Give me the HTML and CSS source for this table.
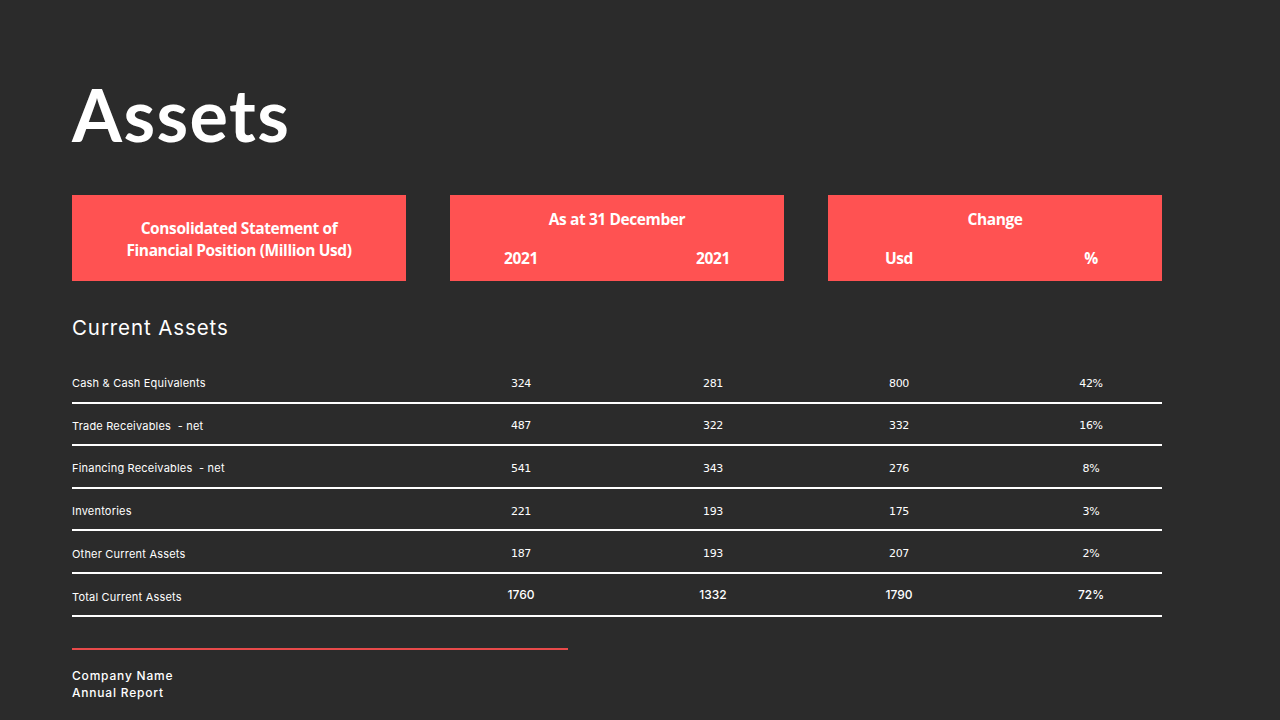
FILE: index.html
```html
<!DOCTYPE html>
<html>
<head>
<meta charset="utf-8">
<link rel="stylesheet" href="styles.css">
</head>
<body>
<main class="page">
  <h1 class="title">Assets</h1>

  <section class="head-grid">
    <div class="head-box head-single">
      <span>Consolidated Statement of</span>
      <span>Financial Position (Million Usd)</span>
    </div>
    <div class="head-box">
      <div class="head-top">As at 31 December</div>
      <div class="pair"><span class="cell">2021</span><span class="cell">2021</span></div>
    </div>
    <div class="head-box">
      <div class="head-top">Change</div>
      <div class="pair"><span class="cell">Usd</span><span class="cell">%</span></div>
    </div>
  </section>

  <h2 class="section-title">Current Assets</h2>

  <section class="table">
    <div class="row">
      <div class="label">Cash &amp; Cash Equivalents</div>
      <div class="pair"><span class="cell">324</span><span class="cell">281</span></div>
      <div class="pair"><span class="cell">800</span><span class="cell">42%</span></div>
    </div>
    <div class="row">
      <div class="label">Trade Receivables &nbsp;- net</div>
      <div class="pair"><span class="cell">487</span><span class="cell">322</span></div>
      <div class="pair"><span class="cell">332</span><span class="cell">16%</span></div>
    </div>
    <div class="row">
      <div class="label">Financing Receivables &nbsp;- net</div>
      <div class="pair"><span class="cell">541</span><span class="cell">343</span></div>
      <div class="pair"><span class="cell">276</span><span class="cell">8%</span></div>
    </div>
    <div class="row">
      <div class="label">Inventories</div>
      <div class="pair"><span class="cell">221</span><span class="cell">193</span></div>
      <div class="pair"><span class="cell">175</span><span class="cell">3%</span></div>
    </div>
    <div class="row">
      <div class="label">Other Current Assets</div>
      <div class="pair"><span class="cell">187</span><span class="cell">193</span></div>
      <div class="pair"><span class="cell">207</span><span class="cell">2%</span></div>
    </div>
    <div class="row total">
      <div class="label">Total Current Assets</div>
      <div class="pair"><span class="cell">1760</span><span class="cell">1332</span></div>
      <div class="pair"><span class="cell">1790</span><span class="cell">72%</span></div>
    </div>
  </section>

  <footer class="footer">
    <div class="accent-line"></div>
    <div class="footer-text">
      <span>Company Name</span>
      <span>Annual Report</span>
    </div>
  </footer>
</main>
</body>
</html>
```

FILE: styles.css
```css
* { box-sizing: border-box; }

html, body {
  margin: 0;
  padding: 0;
  background: #2b2b2b;
  color: #ffffff;
  font-family: "Open Sans", "Liberation Sans", sans-serif;
}

.page {
  width: 1280px;
  height: 720px;
  padding: 0 118px 0 72px;
  display: flex;
  flex-direction: column;
}

.title {
  margin: 74px 0 0 0;
  font-family: "Lato", sans-serif;
  font-weight: 700;
  font-size: 72px;
  line-height: 80px;
  letter-spacing: 1.4px;
}

.head-grid {
  margin-top: 41px;
  display: grid;
  grid-template-columns: repeat(3, 334px);
  column-gap: 44px;
}

.head-box {
  background: #ff5252;
  height: 86px;
  display: flex;
  flex-direction: column;
  font-family: "Open Sans", sans-serif;
  font-weight: 700;
  font-size: 15.5px;
  letter-spacing: -0.4px;
}

.head-single {
  align-items: center;
  justify-content: center;
  line-height: 22px;
  padding-top: 2px;
}

.head-top {
  text-align: center;
  margin-top: 14px;
  line-height: 20px;
}

.head-box .pair {
  margin-top: 19px;
  line-height: 20px;
}

.pair {
  display: flex;
  justify-content: space-between;
  padding: 0 41px;
}

.cell {
  width: 60px;
  text-align: center;
}

.section-title {
  margin: 34px 0 0 0;
  font-family: "Inter", sans-serif;
  font-weight: 400;
  font-size: 20.5px;
  line-height: 26px;
  letter-spacing: 0.9px;
}

.table {
  margin-top: 20px;
  display: flex;
  flex-direction: column;
}

.row {
  display: grid;
  grid-template-columns: repeat(3, 334px);
  column-gap: 44px;
  align-items: center;
  height: 42.6px;
  border-bottom: 2px solid #ffffff;
  padding-top: 4px;
  font-size: 11px;
}

.label {
  font-family: "Inter", sans-serif;
  font-size: 11px;
  letter-spacing: 0.2px;
}

.row .pair {
  font-family: "DejaVu Sans", sans-serif;
  font-size: 11px;
  letter-spacing: -0.3px;
}

.total .label {
  margin-top: 2px;
}

.total .pair {
  font-family: "Inter", sans-serif;
  font-weight: 500;
  font-size: 12px;
  letter-spacing: 0;
  margin-top: -3px;
}

.footer {
  margin-top: 31px;
}

.accent-line {
  width: 496px;
  height: 2px;
  background: #e84a4a;
}

.footer-text {
  margin-top: 17px;
  display: flex;
  flex-direction: column;
  font-family: "Inter", sans-serif;
  font-weight: 500;
  font-size: 12px;
  line-height: 17px;
  letter-spacing: 0.8px;
}
```
